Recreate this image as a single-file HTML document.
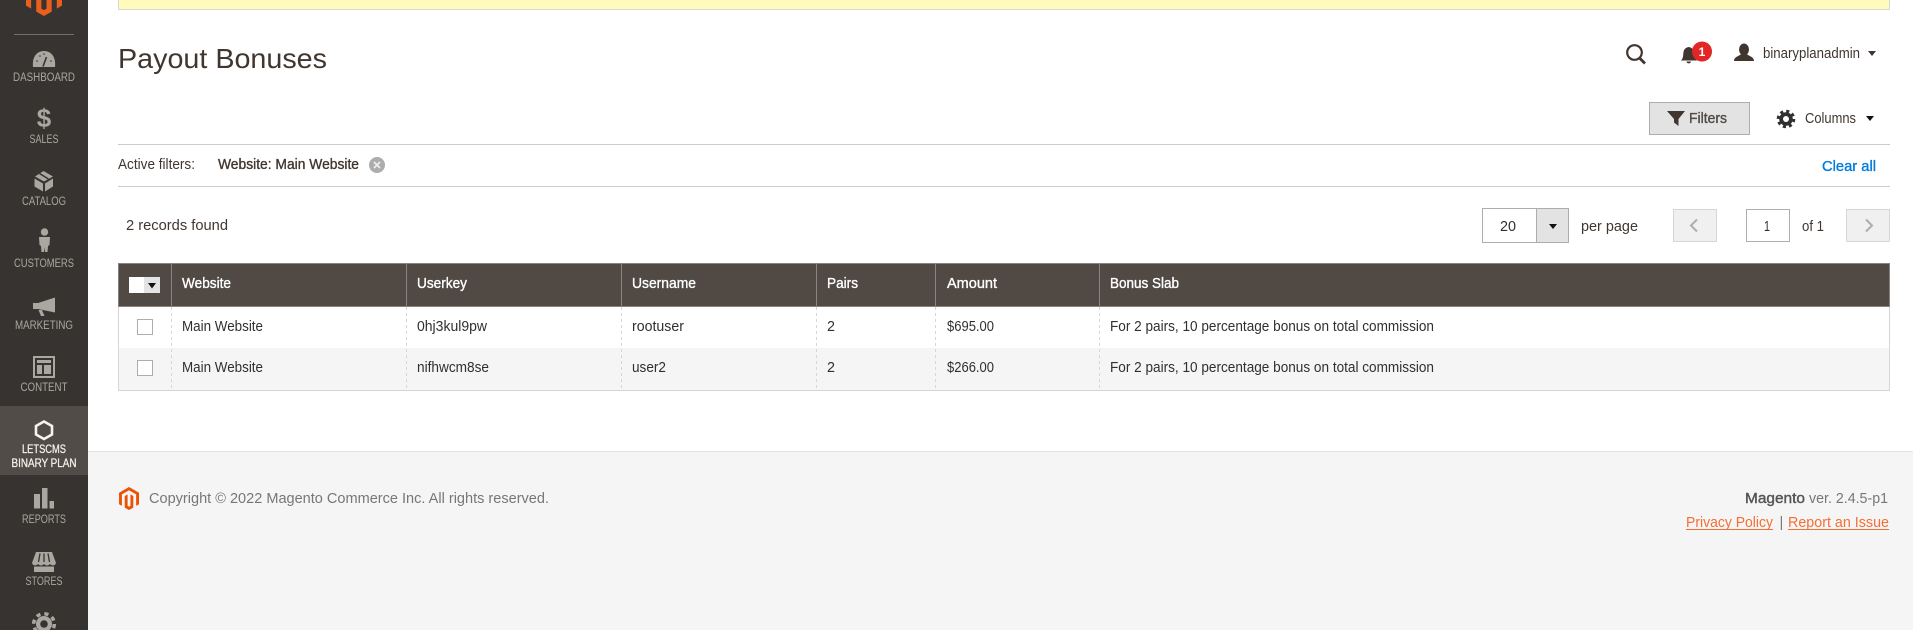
<!DOCTYPE html>
<html lang="en"><head><meta charset="utf-8"><title>Payout Bonuses</title>
<style>
html,body{margin:0;padding:0;background:#fff;width:1913px;height:630px;overflow:hidden}
svg{display:block}
text{font-family:"Liberation Sans",sans-serif;font-size:14.5px;fill:#41362f;white-space:pre}
.n text{font-size:11.5px;fill:#aaa6a0;text-anchor:middle}
.n .a{fill:#f7f3eb;stroke:#f7f3eb;stroke-width:.25px}
.r text{fill:#303030}
.h text{fill:#fff;stroke:#fff;stroke-width:.35px}
.s{stroke:#41362f;stroke-width:.35px}
</style></head><body>
<svg xmlns="http://www.w3.org/2000/svg" width="1913" height="630" viewBox="0 0 1913 630">
<!-- footer -->
<rect x="88" y="451" width="1825" height="179" fill="#f5f5f5"/>
<rect x="88" y="451" width="1825" height="1" fill="#e3e3e3"/>
<!-- sidebar -->
<rect x="0" y="0" width="88" height="630" fill="#373330"/>
<rect x="0" y="406" width="88" height="69" fill="#514c48"/>
<path transform="translate(23.2,-25.5) scale(1.73)" fill="#eb5f1e" d="M12 24l-4.455-2.572v-12l2.97-1.715v12.001l1.485.902 1.485-.902V7.713l2.971 1.715v12L12 24zM22.391 6v12l-2.969 1.714V7.713L12 3.43 4.574 7.713v12.001L1.609 18V6L12 0l10.391 6z"/>
<rect x="14" y="34" width="60" height="1" fill="#736e69"/>
<g fill="#aaa6a0">
<path d="M33 67C32 58 36 51 44 51C52 51 56 58 55 67Z"/>
<path d="M43 66.500L46.500 57" stroke="#373330" stroke-width="1.600"/>
<g fill="#373330"><circle cx="37" cy="61" r=".8"/><circle cx="40" cy="56" r=".8"/><circle cx="44" cy="54" r=".8"/><circle cx="51" cy="61" r=".8"/></g>
<text x="44" y="127" text-anchor="middle" style="font-size:26px;font-weight:bold;fill:#aaa6a0">$</text>
<path d="M34.500 178.500L43 183.500V191.500L34.500 186.500ZM53 178.500L45 183.500V191.500L53 186.500ZM43.500 171L53 176.500L44 181.500L35 176.500Z"/>
<path d="M39.500 173.500L48.500 179" stroke="#373330" stroke-width="1.500"/>
<circle cx="44.500" cy="232" r="3.700"/>
<path d="M39 237H50L49.500 245L48 246L47.500 252H45L44.500 247L44 252H41.500L41 246L39.500 245Z"/>
<path d="M33 303H38L55 297.500V312.500L38 309H33ZM38.500 310H42L44.500 316H41Z"/>
<path fill-rule="evenodd" d="M33 356H55V378H33ZM35 358V376H53V358Z"/>
<path d="M37 360H51V363H37ZM37 365H42V374H37ZM44 365H51V374H44Z"/>
<path fill="none" stroke="#f7f3eb" stroke-width="2.600" d="M44 421.500L52 426V434.500L44 439L36 434.500V426Z"/>
<path d="M34 494H40V508.500H34ZM42 488H47.500V508.500H42ZM49.500 501H54V508.500H49.500Z"/>
<path d="M36 552H52L56 563C55 566 52 566 50 564C48 566 46 566 44 564C42 566 40 566 38 564C36 566 33 566 32 563Z"/>
<path d="M34 566.500H54V572H34Z"/>
<path d="M40 553.500L38.500 562M44 553.500V562M48 553.500L49.500 562" stroke="#373330" stroke-width="1.300"/>
<circle cx="44" cy="624" r="8"/>
<circle cx="44" cy="624" r="10.300" fill="none" stroke="#aaa6a0" stroke-width="3.500" stroke-dasharray="4.100 4"/>
<circle cx="44" cy="624" r="3.800" fill="#373330"/>
</g>
<g class="n">
<text x="44" y="81" textLength="62" lengthAdjust="spacingAndGlyphs">DASHBOARD</text>
<text x="44" y="143" textLength="29" lengthAdjust="spacingAndGlyphs">SALES</text>
<text x="44" y="205" textLength="44" lengthAdjust="spacingAndGlyphs">CATALOG</text>
<text x="44" y="267" textLength="60" lengthAdjust="spacingAndGlyphs">CUSTOMERS</text>
<text x="44" y="329" textLength="58" lengthAdjust="spacingAndGlyphs">MARKETING</text>
<text x="44" y="391" textLength="47" lengthAdjust="spacingAndGlyphs">CONTENT</text>
<text x="44" y="453" textLength="44" lengthAdjust="spacingAndGlyphs" class="a">LETSCMS</text>
<text x="44" y="467" textLength="65" lengthAdjust="spacingAndGlyphs" class="a">BINARY PLAN</text>
<text x="44" y="523" textLength="44" lengthAdjust="spacingAndGlyphs">REPORTS</text>
<text x="44" y="585" textLength="37" lengthAdjust="spacingAndGlyphs">STORES</text>
</g>
<!-- notice -->
<rect x="118.500" y="-3.500" width="1771" height="13" fill="#fffbbb" stroke="#d6d6d6"/>
<!-- title -->
<text x="118" y="68" textLength="209" lengthAdjust="spacingAndGlyphs" style="font-size:28px">Payout Bonuses</text>
<!-- header actions -->
<g fill="#41362f">
<circle cx="1634.500" cy="52.500" r="7.300" fill="none" stroke="#41362f" stroke-width="2.200"/>
<path d="M1639.500 58L1645 63.500" stroke="#41362f" stroke-width="2.800"/>
<path d="M1681 60.500C1683.500 58 1683 55 1683.500 52C1684 49 1686 47.500 1688.500 47C1692 47.500 1694 49.500 1694 53C1694 56 1695 58.500 1697 60.500ZM1686.500 61.500H1691C1691 64 1686.500 64 1686.500 61.500Z"/>
<circle cx="1702" cy="51.500" r="10" fill="#e22626"/>
<text x="1702" y="56" text-anchor="middle" style="font-size:12px;font-weight:bold;fill:#fff">1</text>
<ellipse cx="1744" cy="49.500" rx="5" ry="6"/>
<path d="M1734 61C1734 56.500 1740 56 1741.500 53.500H1746.500C1748 56 1754 56.500 1754 61Z"/>
<path d="M1868 51H1876L1872 56Z"/>
</g>
<text x="1763" y="58" textLength="97" lengthAdjust="spacingAndGlyphs">binaryplanadmin</text>
<!-- toolbar -->
<rect x="1649.500" y="102.500" width="100" height="32" fill="#e3e3e3" stroke="#adadad"/>
<path d="M1667 111H1685L1678.500 119V126L1674 122.500V119Z" fill="#41362f"/>
<text x="1689" y="123" textLength="38" lengthAdjust="spacingAndGlyphs" style="fill:#514943;stroke:#514943;stroke-width:.35px">Filters</text>
<circle cx="1786" cy="119" r="6.800" fill="#303030"/>
<circle cx="1786" cy="119" r="7.800" fill="none" stroke="#303030" stroke-width="3" stroke-dasharray="3.060 3.060"/>
<circle cx="1786" cy="119" r="3" fill="#fff"/>
<text x="1805" y="123" textLength="51" lengthAdjust="spacingAndGlyphs">Columns</text>
<path d="M1866 116H1874L1870 121Z" fill="#111"/>
<!-- filter bar -->
<rect x="118" y="144" width="1772" height="1" fill="#ccc"/>
<rect x="118" y="186" width="1772" height="1" fill="#ccc"/>
<text x="118" y="169" textLength="77" lengthAdjust="spacingAndGlyphs">Active filters:</text>
<text x="218" y="169" textLength="141" lengthAdjust="spacingAndGlyphs" class="s">Website: Main Website</text>
<circle cx="377" cy="165" r="8" fill="#adadad"/>
<path d="M374 162L380 168M380 162L374 168" stroke="#eee" stroke-width="1.800"/>
<text x="1822" y="171" textLength="54" lengthAdjust="spacingAndGlyphs" style="fill:#007bdb;stroke:#007bdb;stroke-width:.35px">Clear all</text>
<!-- pager -->
<text x="126" y="230" textLength="102" lengthAdjust="spacingAndGlyphs">2 records found</text>
<rect x="1482.500" y="208.500" width="86" height="34" fill="#fff" stroke="#adadad"/>
<rect x="1536.500" y="208.500" width="32" height="34" fill="#e3e3e3" stroke="#adadad"/>
<path d="M1549 224H1557L1553 229Z" fill="#111"/>
<text x="1500" y="231" textLength="16" lengthAdjust="spacingAndGlyphs" style="fill:#303030">20</text>
<text x="1581" y="231" textLength="57" lengthAdjust="spacingAndGlyphs">per page</text>
<rect x="1673.500" y="209.500" width="43" height="32" fill="#f0f0f0" stroke="#d6d6d6"/>
<path d="M1697 219.500L1691 225.500L1697 231.500" fill="none" stroke="#adadad" stroke-width="2"/>
<rect x="1746.500" y="209.500" width="43" height="32" fill="#fff" stroke="#adadad"/>
<text x="1764" y="231" textLength="6" lengthAdjust="spacingAndGlyphs" style="fill:#303030">1</text>
<text x="1802" y="231" textLength="22" lengthAdjust="spacingAndGlyphs">of 1</text>
<rect x="1846.500" y="209.500" width="43" height="32" fill="#f0f0f0" stroke="#d6d6d6"/>
<path d="M1866 219.500L1872 225.500L1866 231.500" fill="none" stroke="#adadad" stroke-width="2"/>
<!-- table -->
<rect x="118" y="263" width="1772" height="44" fill="#8a837f"/>
<rect x="119" y="264" width="1770" height="42" fill="#514943"/>
<g fill="#8a837f"><rect x="171" y="264" width="1" height="42"/><rect x="406" y="264" width="1" height="42"/><rect x="621" y="264" width="1" height="42"/><rect x="816" y="264" width="1" height="42"/><rect x="935" y="264" width="1" height="42"/><rect x="1099" y="264" width="1" height="42"/></g>
<rect x="118" y="348" width="1772" height="42" fill="#f5f5f5"/>
<rect x="118" y="307" width="1" height="84" fill="#d6d6d6"/>
<rect x="1889" y="307" width="1" height="84" fill="#d6d6d6"/>
<rect x="118" y="390" width="1772" height="1" fill="#d6d6d6"/>
<g stroke="#d6d6d6" stroke-dasharray="3 3"><path d="M171.500 307V390M406.500 307V390M621.500 307V390M816.500 307V390M935.500 307V390M1099.500 307V390"/></g>
<rect x="129" y="277" width="31" height="16" fill="#e3e3e3"/>
<rect x="129" y="277" width="15" height="16" fill="#fff"/>
<path d="M148 283H156L152 288.500Z" fill="#111"/>
<rect x="137.500" y="319.500" width="15" height="15" fill="#fff" stroke="#adadad"/>
<rect x="137.500" y="360.500" width="15" height="15" fill="#fff" stroke="#adadad"/>
<g class="h">
<text x="182" y="288" textLength="49" lengthAdjust="spacingAndGlyphs">Website</text>
<text x="417" y="288" textLength="50" lengthAdjust="spacingAndGlyphs">Userkey</text>
<text x="632" y="288" textLength="64" lengthAdjust="spacingAndGlyphs">Username</text>
<text x="827" y="288" textLength="31" lengthAdjust="spacingAndGlyphs">Pairs</text>
<text x="947" y="288" textLength="50" lengthAdjust="spacingAndGlyphs">Amount</text>
<text x="1110" y="288" textLength="69" lengthAdjust="spacingAndGlyphs">Bonus Slab</text>
</g>
<g class="r">
<text x="182" y="331" textLength="81" lengthAdjust="spacingAndGlyphs">Main Website</text>
<text x="417" y="331" textLength="70" lengthAdjust="spacingAndGlyphs">0hj3kul9pw</text>
<text x="632" y="331" textLength="52" lengthAdjust="spacingAndGlyphs">rootuser</text>
<text x="827" y="331" textLength="8" lengthAdjust="spacingAndGlyphs">2</text>
<text x="947" y="331" textLength="47" lengthAdjust="spacingAndGlyphs">$695.00</text>
<text x="1110" y="331" textLength="324" lengthAdjust="spacingAndGlyphs">For 2 pairs, 10 percentage bonus on total commission</text>
<text x="182" y="372" textLength="81" lengthAdjust="spacingAndGlyphs">Main Website</text>
<text x="417" y="372" textLength="72" lengthAdjust="spacingAndGlyphs">nifhwcm8se</text>
<text x="632" y="372" textLength="34" lengthAdjust="spacingAndGlyphs">user2</text>
<text x="827" y="372" textLength="8" lengthAdjust="spacingAndGlyphs">2</text>
<text x="947" y="372" textLength="47" lengthAdjust="spacingAndGlyphs">$266.00</text>
<text x="1110" y="372" textLength="324" lengthAdjust="spacingAndGlyphs">For 2 pairs, 10 percentage bonus on total commission</text>
</g>
<!-- footer content -->
<path transform="translate(117.500,487) scale(.96)" fill="#eb5202" d="M12 24l-4.455-2.572v-12l2.97-1.715v12.001l1.485.902 1.485-.902V7.713l2.971 1.715v12L12 24zM22.391 6v12l-2.969 1.714V7.713L12 3.43 4.574 7.713v12.001L1.609 18V6L12 0l10.391 6z"/>
<text x="149" y="503" textLength="400" lengthAdjust="spacingAndGlyphs" style="fill:#777">Copyright © 2022 Magento Commerce Inc. All rights reserved.</text>
<text x="1745" y="503" textLength="60" lengthAdjust="spacingAndGlyphs" style="fill:#555;stroke:#555;stroke-width:.4px">Magento</text>
<text x="1809" y="503" textLength="79" lengthAdjust="spacingAndGlyphs" style="fill:#777">ver. 2.4.5-p1</text>
<text x="1686" y="527" textLength="87" lengthAdjust="spacingAndGlyphs" style="fill:#f46f33">Privacy Policy</text>
<rect x="1686" y="529" width="87" height="1" fill="#f46f33"/>
<text x="1779.500" y="527" style="fill:#777">|</text>
<text x="1788" y="527" textLength="101" lengthAdjust="spacingAndGlyphs" style="fill:#f46f33">Report an Issue</text>
<rect x="1788" y="529" width="101" height="1" fill="#f46f33"/>
</svg>
</body></html>
